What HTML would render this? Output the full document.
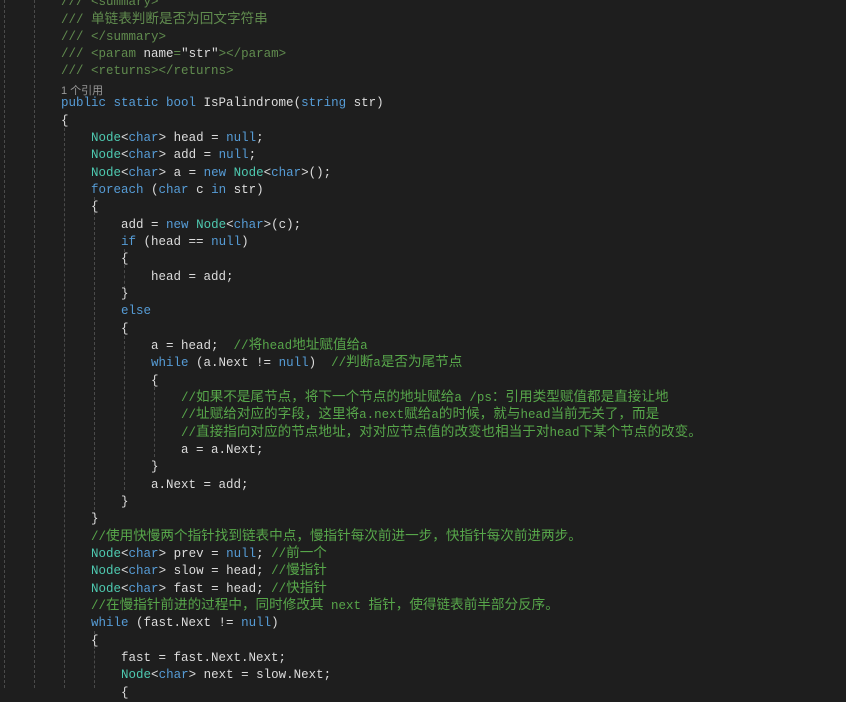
<!DOCTYPE html>
<html><head><meta charset="utf-8"><style>
body{margin:0;width:846px;height:688px;background:#1e1e1e;overflow:hidden;position:relative}
pre{position:absolute;left:1px;margin:0;font-family:"Liberation Mono","Noto Sans CJK SC",monospace;font-size:12.5px;line-height:17.33px;color:#dcdcdc;white-space:pre}
.k{color:#569cd6}.t{color:#4ec9b0}.c{color:#57a64a}.d{color:#608b4e}
.z{font-family:"Noto Sans CJK SC",sans-serif;font-size:13.6px;line-height:0}
.g{position:absolute;width:0;border-left:1px dashed #4a4a4a}
.lens{position:absolute;left:61px;top:82px;font-family:"Liberation Sans","Noto Sans CJK SC",sans-serif;font-size:11px;color:#999}
</style></head><body>
<div class="g" style="left:4px;top:0;height:688px"></div>
<div class="g" style="left:34px;top:0;height:688px"></div>
<div class="g" style="left:64px;top:128px;height:560px"></div>
<div class="g" style="left:94px;top:197px;height:318px"></div>
<div class="g" style="left:94px;top:631px;height:57px"></div>
<div class="g" style="left:124px;top:249px;height:40px"></div>
<div class="g" style="left:124px;top:336px;height:154px"></div>
<div class="g" style="left:154px;top:387px;height:70px"></div>
<pre style="top:-5.6px;line-height:17.25px"><span class="d">        /// &lt;summary&gt;
        /// <span class="z">单链表判断是否为回文字符串</span>
        /// &lt;/summary&gt;
        /// &lt;param </span>name<span class="d">=</span>"str"<span class="d">&gt;&lt;/param&gt;
        /// &lt;returns&gt;&lt;/returns&gt;</span></pre>
<div class="lens">1 个引用</div>
<pre style="top:95.4px">        <span class="k">public static bool</span> IsPalindrome(<span class="k">string</span> str)
        {
            <span class="t">Node</span>&lt;<span class="k">char</span>&gt; head = <span class="k">null</span>;
            <span class="t">Node</span>&lt;<span class="k">char</span>&gt; add = <span class="k">null</span>;
            <span class="t">Node</span>&lt;<span class="k">char</span>&gt; a = <span class="k">new</span> <span class="t">Node</span>&lt;<span class="k">char</span>&gt;();
            <span class="k">foreach</span> (<span class="k">char</span> c <span class="k">in</span> str)
            {
                add = <span class="k">new</span> <span class="t">Node</span>&lt;<span class="k">char</span>&gt;(c);
                <span class="k">if</span> (head == <span class="k">null</span>)
                {
                    head = add;
                }
                <span class="k">else</span>
                {
                    a = head;  <span class="c">//<span class="z">将</span>head<span class="z">地址赋值给</span>a</span>
                    <span class="k">while</span> (a.Next != <span class="k">null</span>)  <span class="c">//<span class="z">判断</span>a<span class="z">是否为尾节点</span></span>
                    {
                        <span class="c">//<span class="z">如果不是尾节点，将下一个节点的地址赋给</span>a /ps<span class="z">：引用类型赋值都是直接让地</span></span>
                        <span class="c">//<span class="z">址赋给对应的字段，这里将</span>a.next<span class="z">赋给</span>a<span class="z">的时候，就与</span>head<span class="z">当前无关了，而是</span></span>
                        <span class="c">//<span class="z">直接指向对应的节点地址，对对应节点值的改变也相当于对</span>head<span class="z">下某个节点的改变。</span></span>
                        a = a.Next;
                    }
                    a.Next = add;
                }
            }
            <span class="c">//<span class="z">使用快慢两个指针找到链表中点，慢指针每次前进一步，快指针每次前进两步。</span></span>
            <span class="t">Node</span>&lt;<span class="k">char</span>&gt; prev = <span class="k">null</span>; <span class="c">//<span class="z">前一个</span></span>
            <span class="t">Node</span>&lt;<span class="k">char</span>&gt; slow = head; <span class="c">//<span class="z">慢指针</span></span>
            <span class="t">Node</span>&lt;<span class="k">char</span>&gt; fast = head; <span class="c">//<span class="z">快指针</span></span>
            <span class="c">//<span class="z">在慢指针前进的过程中，同时修改其</span> next <span class="z">指针，使得链表前半部分反序。</span></span>
            <span class="k">while</span> (fast.Next != <span class="k">null</span>)
            {
                fast = fast.Next.Next;
                <span class="t">Node</span>&lt;<span class="k">char</span>&gt; next = slow.Next;
                {</pre>
</body></html>
